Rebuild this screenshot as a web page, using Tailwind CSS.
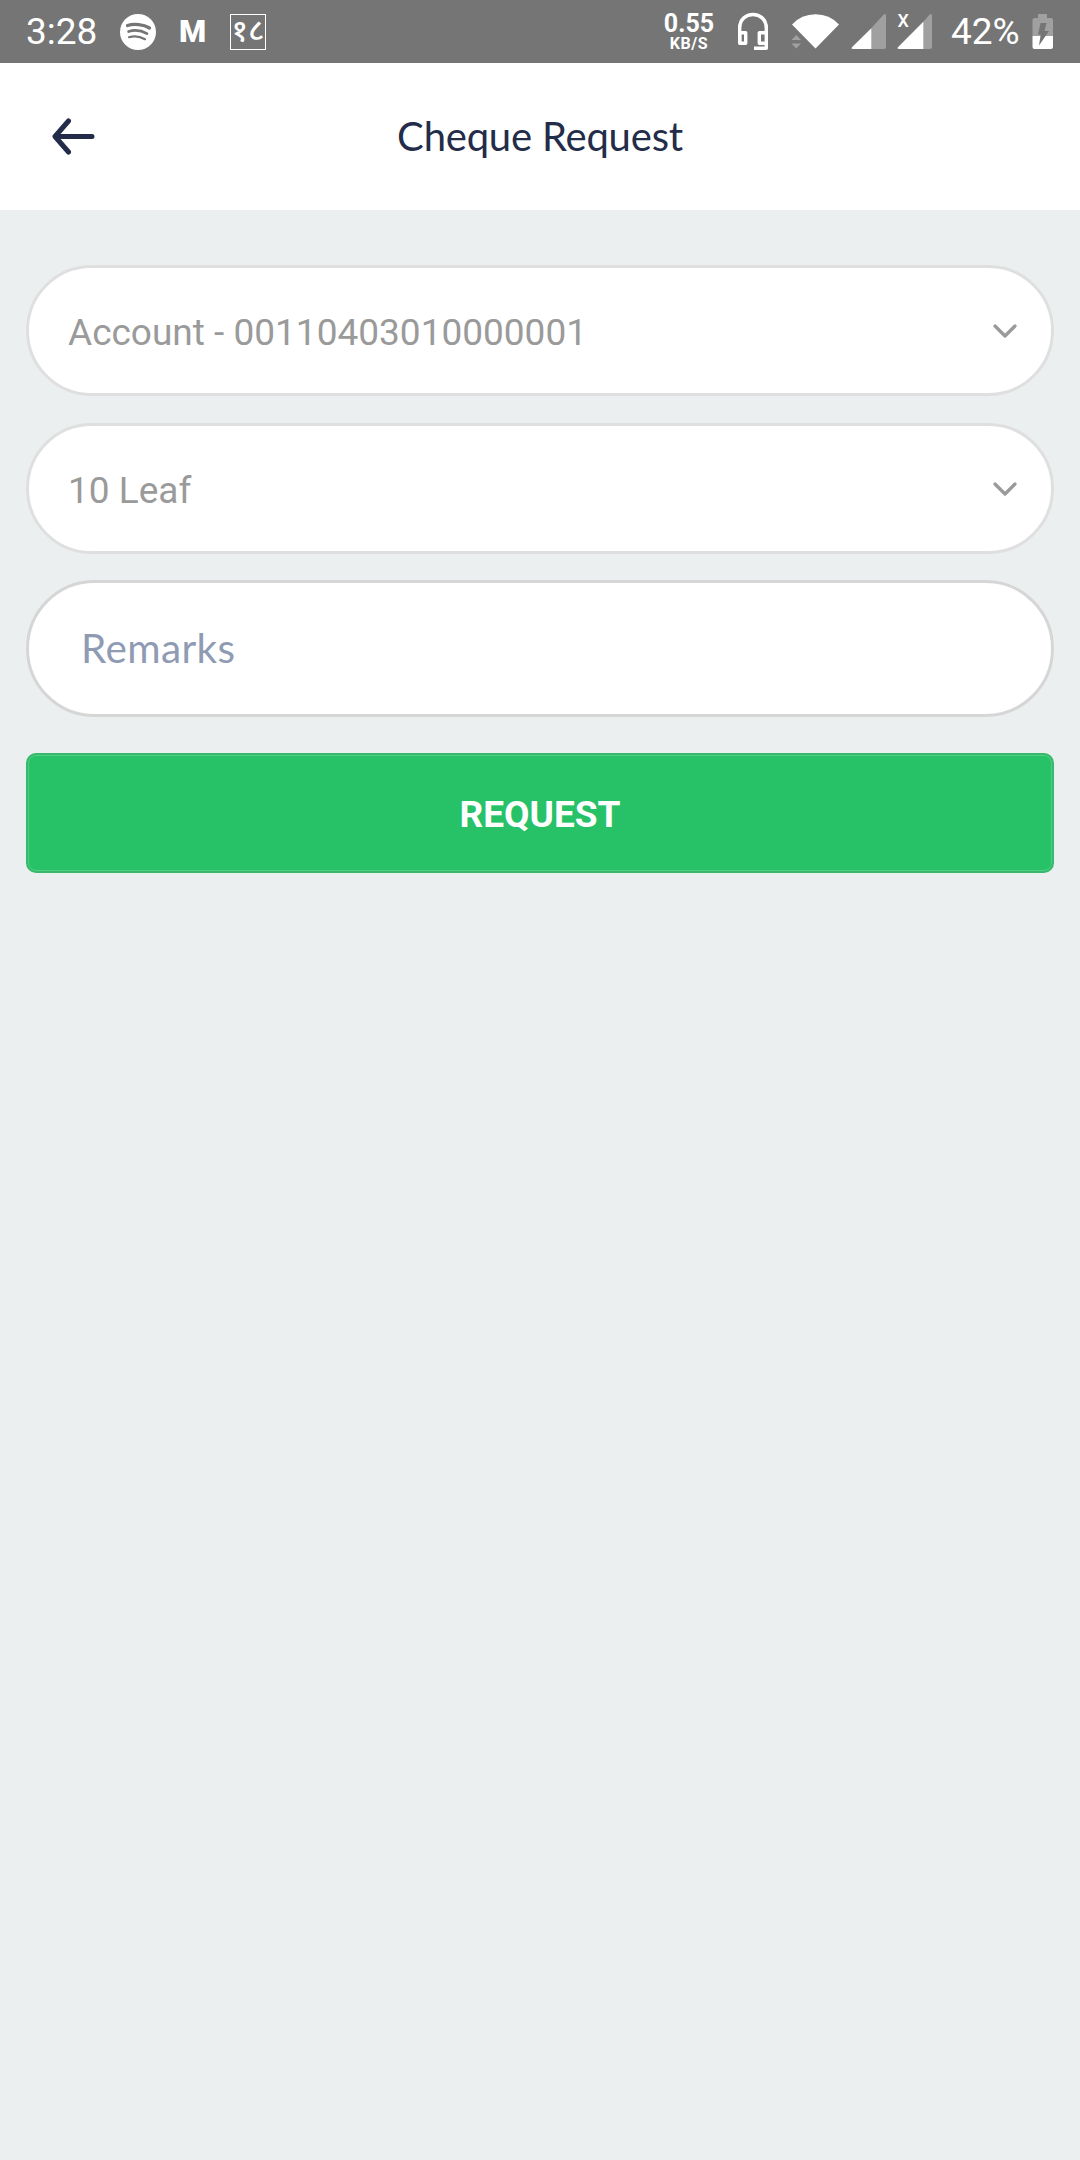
<!DOCTYPE html>
<html lang="en">
<head>
    <meta charset="UTF-8">
    <meta name="viewport" content="width=device-width, initial-scale=1.0">
    <title>Cheque Request</title>
    <script src="https://cdn.jsdelivr.net/npm/@tailwindcss/browser@4"></script>
</head>
<body class="min-h-screen bg-[#ebeff0] font-['Roboto',sans-serif]">
    <!-- Status bar -->
    <div class="flex h-[63px] items-center justify-between bg-[#757575] pl-[26px] pr-[27px] text-white">
        <div class="flex items-center">
            <span class="w-[94px] text-[37px] leading-[62px]">3:28</span>
            <svg class="size-9" viewBox="0 0 36 36" fill="none">
                <circle cx="18" cy="18" r="18" fill="#fff"/>
                <g stroke="#757575" stroke-linecap="round">
                    <path d="M7.5 11.5C14 9.500 23.5 10.500 29.5 14" stroke-width="3.2"/>
                    <path d="M8.6 17.5C14.5 15.700 21.8 16.700 27 19.700" stroke-width="2.7"/>
                    <path d="M9 23.2C14.5 21.7 20 22.4 25 25.2" stroke-width="2.2"/>
                </g>
            </svg>
            <span class="ml-[23px] w-[29px] text-[31px] leading-[64px] font-black">M</span>
            <span class="ml-[22px] flex size-9 items-center justify-center border border-white pb-[5px] text-[31px] leading-none font-medium font-['Noto_Sans',sans-serif]">१८</span>
        </div>
        <div class="flex items-center">
            <div class="flex w-[50px] flex-col items-center font-bold">
                <span class="text-[25px] leading-[24px]">0.55</span>
                <span class="text-[16px] leading-[15px] tracking-[0.6px]">KB/S</span>
            </div>
            <svg class="ml-[23px] h-[63px] w-[32px]" viewBox="0 0 32 63" fill="none" stroke="#fff" stroke-width="3.4" stroke-linejoin="round">
                <path d="M2.7 43V28C2.7 10 29.3 10 29.3 28V48.3H17"/>
                <path d="M2.7 32.7H8.7V43.3H2.7Z"/>
                <path d="M29.3 32.7H22.3V43.3H29.3"/>
            </svg>
            <svg class="ml-[22px] h-[63px] w-[48px]" viewBox="0 0 48 63">
                <path d="M24.5 48.5L1 24.5Q10.5 14.3 24.5 14.3T48 24.5Z" fill="#fff"/>
                <path d="M.5 40L5.2 35L10 40ZM.5 43.5H10L5.2 48.5Z" fill="#a0a0a0"/>
            </svg>
            <svg class="ml-[12px] h-[63px] w-[36px]" viewBox="0 0 36 63">
                <path d="M20 28.5L32.5 14.8Q35 12.8 35 16V47Q35 49 33 49H20Z" fill="#a0a0a0"/>
                <path d="M20.3 28.2V49H2Q-.5 49 1.2 47Z" fill="#fff"/>
            </svg>
            <svg class="ml-[10px] h-[63px] w-[36px]" viewBox="0 0 36 63">
                <path d="M26 22L32.5 14.8Q35 12.8 35 16V47Q35 49 33 49H26Z" fill="#a0a0a0"/>
                <path d="M26.3 21.8V49H2Q-.5 49 1.2 47Z" fill="#fff"/>
                <text x="0.5" y="27" font-family="Roboto" font-size="18" font-weight="500" fill="#fff">X</text>
            </svg>
            <span class="ml-[18px] w-[81px] text-[37px] leading-[62px] whitespace-nowrap">42%</span>
            <svg class="h-[63px] w-[21px]" viewBox="0 0 21 63">
                <path d="M6 14H15V18H19Q21 18 21 20V36H.5V20Q.5 18 2.5 18H6Z" fill="#a0a0a0"/>
                <path d="M.5 36H21V47Q21 49 19 49H2.5Q.5 49 .5 47Z" fill="#fff"/>
                <path d="M8.5 23H14.5L12.5 31H17L7 45.5L8.7 34.5H6Z" fill="#757575"/>
            </svg>
        </div>
    </div>

    <!-- Header -->
    <header class="grid h-[147px] grid-cols-[1fr_auto_1fr] items-center bg-white pb-[2px] text-[#232c48]">
        <svg class="ml-[52px] h-[38px] w-[44px]" viewBox="0 0 44 38" fill="none" stroke="currentColor" stroke-width="5" stroke-linecap="round" stroke-linejoin="round">
            <path d="M40 19.5H3.5M16.5 4L3 19.5L16.5 35"/>
        </svg>
        <h1 class="text-[40px] leading-[48px] tracking-[-0.2px] font-['Lato',sans-serif]">Cheque Request</h1>
    </header>

    <!-- Form -->
    <main class="px-[26px] pt-[55px]">
        <div class="flex h-[131px] items-center justify-between rounded-full border-3 border-[#dfdfdf] bg-white pr-[33px] pl-[39px] text-[37px] text-[#9a9a9a]">
            <span class="pt-[4px]">Account - 00110403010000001</span>
            <svg class="h-[16px] w-[26px]" viewBox="0 0 26 16" fill="none" stroke="currentColor" stroke-width="3.3" stroke-linecap="round" stroke-linejoin="round">
                <path d="M3 3L13 13L23 3"/>
            </svg>
        </div>
        <div class="mt-[27px] flex h-[131px] items-center justify-between rounded-full border-3 border-[#dfdfdf] bg-white pr-[33px] pl-[39px] text-[37px] text-[#9a9a9a]">
            <span class="pt-[4px]">10 Leaf</span>
            <svg class="h-[16px] w-[26px]" viewBox="0 0 26 16" fill="none" stroke="currentColor" stroke-width="3.3" stroke-linecap="round" stroke-linejoin="round">
                <path d="M3 3L13 13L23 3"/>
            </svg>
        </div>
        <input type="text" placeholder="Remarks" class="mt-[26px] block h-[137px] w-full rounded-full border-3 border-[#d6d6d6] bg-white px-[52px] pb-[2px] text-[40.5px] tracking-[0.4px] font-['Lato',sans-serif] placeholder:text-[#8f9bb3]">
        <button class="mt-[36px] block h-[120px] w-full rounded-[10px] border-2 border-[#38b86a] bg-[#27c267] pt-[4px] text-[37px] font-bold text-white inset-ring-1 inset-ring-[#4fce84]">REQUEST</button>
    </main>
</body>
</html>
